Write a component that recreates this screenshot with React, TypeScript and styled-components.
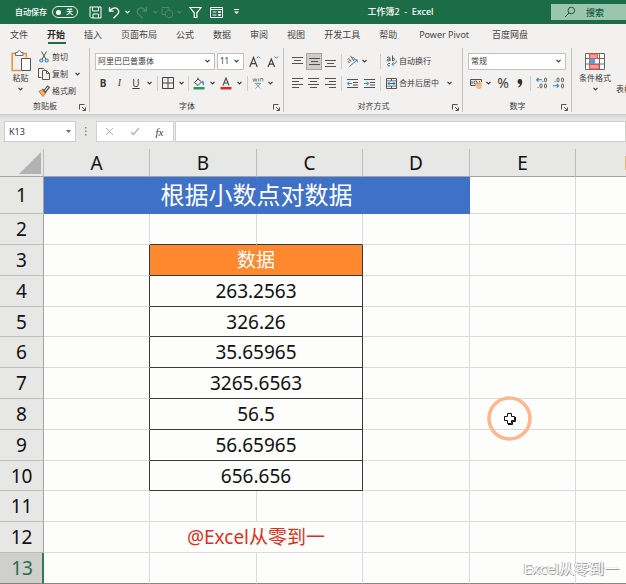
import React from 'react';
import styled, { createGlobalStyle, css } from 'styled-components';

const GlobalStyle = createGlobalStyle`
  *, *::before, *::after { box-sizing: border-box; }
  body {
    margin: 0;
    background: #e7e7e6;
    font-family: "Noto Sans", "Noto Sans CJK SC", sans-serif;
    color: #3b3a39;
    overflow: hidden;
  }
  button, input, select { font: inherit; color: inherit; }
  svg { display: block; flex: none; }
`;

const Window = styled.main`
  display: flex;
  flex-direction: column;
  overflow: hidden;
`;

/* ---------- Title bar ---------- */

const TitleBar = styled.header`
  display: flex;
  align-items: center;
  height: 24px;
  padding-left: 15px;
  background: #1c6c47;
  color: #fff;
  font-size: 9px;
`;

const AutoSave = styled.label`
  display: flex;
  align-items: center;
  gap: 5px;
  width: 70px;
  font-size: 8px;
  font-weight: 500;
  line-height: 12px;
  white-space: nowrap;
`;

const SwitchTrack = styled.span`
  display: flex;
  align-items: center;
  justify-content: space-between;
  width: 26px;
  height: 12px;
  padding: 0 4px 0 3px;
  border: 1px solid #e8f2ec;
  border-radius: 6px;
  font-size: 7px;
  line-height: 10px;
`;

const SwitchInput = styled.input`
  appearance: none;
  width: 5px;
  height: 5px;
  margin: 0;
  border-radius: 50%;
  background: #fff;
`;

const QuickButton = styled.button<{ $w: number; $dim?: boolean }>`
  display: flex;
  align-items: center;
  justify-content: center;
  width: ${(p) => p.$w}px;
  height: 20px;
  padding: 0;
  border: 0;
  background: none;
  color: ${(p) => (p.$dim ? '#4c8a6b' : '#fff')};
`;

const DocumentTitle = styled.h1`
  flex: 1;
  margin: 0;
  font-size: 9px;
  font-weight: 500;
  line-height: 12px;
  text-align: center;
  white-space: pre;
`;

const SearchBox = styled.label`
  display: flex;
  align-items: center;
  gap: 10px;
  width: 75px;
  height: 16px;
  padding-left: 13px;
  background: #9ac6b0;
  color: #17593a;
`;

const SearchInput = styled.input`
  width: 38px;
  padding: 0;
  border: 0;
  outline: 0;
  background: none;
  font-size: 9px;
  font-weight: 500;
  &::placeholder { color: #17593a; opacity: 1; }
`;

/* ---------- Tabs ---------- */

const Tabs = styled.nav`
  display: flex;
  height: 24px;
  padding-left: 1px;
  background: #f3f1ef;
`;

const Tab = styled.button<{ $active?: boolean; $addin?: boolean }>`
  height: 20px;
  padding: 1px ${(p) => (p.$addin ? 11 : 10)}px 0 ${(p) => (p.$addin ? 12 : 9)}px;
  border: 0;
  background: ${(p) =>
    p.$active
      ? 'linear-gradient(#1c6c47, #1c6c47) center bottom / 18px 2px no-repeat'
      : 'none'};
  color: ${(p) => (p.$active ? '#252423' : '#454341')};
  font-size: 9px;
  font-weight: ${(p) => (p.$active ? 700 : 400)};
  line-height: 14px;
  white-space: nowrap;
`;

/* ---------- Ribbon ---------- */

const Ribbon = styled.section`
  display: flex;
  height: 67px;
  background: #f3f1ef;
  border-bottom: 1px solid #cfcdcc;
  font-size: 8px;
  line-height: 12px;
  overflow: hidden;
`;

const Group = styled.div<{ $w?: number }>`
  display: flex;
  flex-direction: column;
  flex: ${(p) => (p.$w ? `0 0 ${p.$w}px` : '1 0 auto')};
  ${(p) =>
    p.$w &&
    css`
      background: linear-gradient(#c4c2c0, #c4c2c0) right top / 1px 64px no-repeat;
    `}
`;

const GroupBody = styled.div<{ $pad: number }>`
  display: flex;
  flex-direction: column;
  height: 51px;
  padding: 4px 0 0 ${(p) => p.$pad}px;
  gap: 4px;
`;

const GroupCaption = styled.div`
  display: grid;
  grid-template-columns: 14px 1fr 14px;
  align-items: center;
  height: 14px;
  text-align: center;
`;

const Caption = styled.span`
  grid-column: 2;
`;

const Launcher = styled.button`
  padding: 2px 0 0 3px;
  border: 0;
  background: none;
`;

const Line = styled.div`
  display: flex;
  align-items: center;
  height: 18px;
`;

const Tool = styled.button<{ $w: number; $pressed?: boolean; $start?: boolean }>`
  display: flex;
  align-items: center;
  justify-content: ${(p) => (p.$start ? 'flex-start' : 'center')};
  gap: 2px;
  width: ${(p) => p.$w}px;
  flex: none;
  height: 17px;
  padding: 0;
  border: ${(p) => (p.$pressed ? '1px solid #a6a4a2' : '0')};
  background: ${(p) => (p.$pressed ? '#cfcdcb' : 'none')};
  white-space: nowrap;
`;

const Rule = styled.span<{ $before?: number; $after: number }>`
  width: 1px;
  height: 15px;
  margin: 0 ${(p) => p.$after}px 0 ${(p) => p.$before ?? 0}px;
  background: #cfcdcb;
`;

const Glyph = styled.span<{ $kind: 'bold' | 'italic' | 'underline' }>`
  font-size: 10px;
  font-weight: ${(p) => (p.$kind === 'bold' ? 700 : 400)};
  font-style: ${(p) => (p.$kind === 'italic' ? 'italic' : 'normal')};
  font-family: ${(p) => (p.$kind === 'italic' ? '"Liberation Serif", serif' : 'inherit')};
  text-decoration: ${(p) => (p.$kind === 'underline' ? 'underline' : 'none')};
`;

const Percent = styled.span`
  font-size: 14px;
  line-height: 16px;
`;

const SelectBox = styled.label<{ $w: number }>`
  display: grid;
  grid-template-columns: 1fr 9px;
  align-items: center;
  width: ${(p) => p.$w}px;
  height: 17px;
  margin-right: 2px;
  flex: none;
  border: 1px solid #c4c2c0;
  background: #fff;
`;

const Select = styled.select`
  grid-area: 1 / 1 / 2 / 3;
  appearance: none;
  width: 100%;
  height: 15px;
  padding: 0 8px 0 2px;
  border: 0;
  outline: 0;
  background: none;
`;

const SelectArrow = styled.span`
  grid-area: 1 / 2;
  pointer-events: none;
`;

const ClipboardBody = styled.div`
  display: flex;
  height: 51px;
  padding-left: 7px;
`;

const BigTool = styled.button<{ $w: number; $top: number }>`
  display: flex;
  flex-direction: column;
  align-items: center;
  width: ${(p) => p.$w}px;
  flex: none;
  padding: ${(p) => p.$top}px 0 0;
  border: 0;
  background: none;
  white-space: nowrap;
`;

const BigLabel = styled.span<{ $gap: number }>`
  margin: ${(p) => p.$gap}px 0 3px;
`;

const ClipboardList = styled.div`
  display: flex;
  flex-direction: column;
  padding-left: 4px;
`;

const StylesBody = styled.div`
  display: flex;
  height: 51px;
  padding-left: 3px;
`;

/* ---------- Formula bar ---------- */

const FormulaBar = styled.section`
  display: flex;
  height: 34px;
  padding: 6px 0 7px 4px;
  background: linear-gradient(#d9d8d8, #e7e7e6 5px);
`;

const NameBox = styled.label`
  display: flex;
  align-items: center;
  width: 72px;
  padding: 0 4px;
  border: 1px solid #cfcfce;
  background: #fff;
`;

const NameInput = styled.input`
  flex: 1;
  min-width: 0;
  padding: 0;
  border: 0;
  outline: 0;
  background: none;
  font-size: 9px;
`;

const Dots = styled.span`
  display: flex;
  align-items: center;
  justify-content: center;
  width: 20px;
`;

const FormulaActions = styled.div`
  display: flex;
  align-items: center;
  width: 78px;
  border: 1px solid #d2d2d1;
  background: #fff;
`;

const FormulaButton = styled.button`
  display: flex;
  justify-content: center;
  width: 25px;
  padding: 0;
  border: 0;
  background: none;
  color: #b4b3b2;
`;

const Fx = styled.span`
  color: #3b3a39;
  font: italic 400 11px/12px "Liberation Serif", serif;
`;

const FormulaInput = styled.input`
  flex: 1;
  min-width: 0;
  margin-left: 1px;
  border: 1px solid #cfcfce;
  outline: 0;
  background: #fff;
`;

/* ---------- Sheet ---------- */

const Sheet = styled.section`
  position: relative;
  overflow: hidden;
`;

const Grid = styled.table`
  table-layout: fixed;
  width: 683px;
  border-collapse: separate;
  border-spacing: 0;
  background: #fdfdfc;
  color: #111;
  font-size: 19px;
  line-height: 24px;
`;

const Col = styled.col<{ $w: number }>`
  width: ${(p) => p.$w}px;
`;

const Row = styled.tr<{ $h: number }>`
  height: ${(p) => p.$h}px;
`;

const ColumnHead = styled.th`
  padding: 0;
  border-right: 1px solid #bdbcbd;
  border-bottom: 1px solid #a3a3a6;
  background: #e7e7e6;
  font-weight: 400;
`;

const RowHead = styled.th<{ $active?: boolean }>`
  padding: ${(p) => (p.$active ? '0 0 0 2px' : '0')};
  border-right: ${(p) => (p.$active ? '2px solid #2f7d58' : '1px solid #a3a3a6')};
  border-bottom: 1px solid ${(p) => (p.$active ? '#858587' : '#bdbcbd')};
  background: ${(p) => (p.$active ? '#cfcfce' : '#e7e7e6')};
  color: ${(p) => (p.$active ? '#286b4c' : '#111')};
  font-weight: 400;
`;

type CellLook = 'plain' | 'title' | 'heading' | 'value' | 'credit';

const looks = {
  plain: css``,
  title: css`
    background: #3f71c9;
    border-color: #3f71c9;
    color: #fff;
    font-size: 24px;
    line-height: 30px;
  `,
  heading: css`
    background: #fd882d;
    color: #fff;
    border-color: #3a3a3a;
  `,
  value: css`
    border-color: #3a3a3a;
  `,
  credit: css`
    color: #e0301c;
  `,
};

const Cell = styled.td<{ $look?: CellLook; $inkRight?: boolean; $inkBottom?: boolean; $last?: boolean }>`
  padding: 0;
  border-right: 1px solid #d9dbdc;
  border-bottom: 1px solid #d9dbdc;
  text-align: center;
  white-space: nowrap;
  ${(p) => looks[p.$look ?? 'plain']}
  ${(p) => p.$inkRight && 'border-right-color: #3a3a3a;'}
  ${(p) => p.$inkBottom && 'border-bottom-color: #3a3a3a;'}
  ${(p) => p.$last && 'border-bottom-color: #858587;'}
`;

const Pointer = styled.div`
  position: absolute;
  left: 487px;
  top: 247px;
`;

const Watermark = styled.div`
  position: absolute;
  right: 7px;
  bottom: 4px;
  color: #fdfdfc;
  font-size: 15px;
  line-height: 24px;
  text-shadow: 1px 1px 0 #9a9a9a, -1px 0 0 #b8b8b8;
`;

/* ---------- Icons ---------- */

const Caret = () => (
  <svg width="5" height="4" viewBox="0 0 5 4" fill="none" stroke="currentColor" strokeWidth="1.200"><path d="M.5 .8 2.5 2.8 4.5 .8" /></svg>
);

const SearchIcon = () => (
  <svg width="12" height="12" viewBox="0 0 12 12" fill="none" stroke="currentColor"><circle cx="7.3" cy="4.5" r="3.3" /><path d="M5 7 1 11" /></svg>
);

const SaveIcon = () => (
  <svg width="13" height="13" viewBox="0 0 13 13" fill="none" stroke="currentColor"><path d="M1 1h11v11H2.5L1 10.500zM3.500 1v4h6V1M4 12V8h5.500v4" /></svg>
);

const UndoIcon = ({ flip }: { flip?: boolean }) => (
  <svg width="12" height="13" viewBox="0 0 12 13" fill="none" stroke="currentColor" strokeWidth="1.3">
    <g transform={flip ? 'matrix(-1 0 0 1 12 0)' : undefined}><path d="M1.500 1v4.200h4.200M1.700 5C4 1.800 7.500 1 9.500 3s1.500 4-.3 5.600L5.500 12.300" /></g>
  </svg>
);

const ShapesIcon = () => (
  <svg width="13" height="13" viewBox="0 0 13 13" fill="none" stroke="currentColor"><path d="M4 8.500H1v-7h7V4" /><circle cx="8" cy="8" r="3.800" /></svg>
);

const FilterIcon = () => (
  <svg width="13" height="13" viewBox="0 0 13 13" fill="none" stroke="currentColor" strokeWidth="1.200"><path d="M1 1.500h11L7.900 6.800v4.700H5.200V6.800z" /></svg>
);

const FormIcon = () => (
  <svg width="13" height="11" viewBox="0 0 13 11" fill="none" stroke="currentColor"><path d="M.5 .5h12v10H.5zM.5 2.500h12M2.500 5h4M2.500 8h4M8.500 4.500h2v1h-2zM8.500 7.500h2v1h-2z" /></svg>
);

const CustomizeIcon = () => (
  <svg width="7" height="6" viewBox="0 0 7 6" fill="none" stroke="currentColor"><path d="M1 .5h5" /><path d="M1 2.500h5L3.500 5z" fill="currentColor" stroke="none" /></svg>
);

const LauncherIcon = () => (
  <svg width="7" height="7" viewBox="0 0 7 7" fill="none" stroke="#55534f"><path d="M.5 5.500v-5h5M3 3l3 3M6.500 3.500v3h-3" /></svg>
);

const PasteIcon = () => (
  <svg width="20" height="22" viewBox="0 0 20 22" fill="none">
    <path d="M4.500 3.500H1.200v17H10M12 3.500h3.300v4" stroke="#e8953a" strokeWidth="1.600" />
    <path d="M4.500 5.500v-3h2c.3-2.300 3.200-2.300 3.500 0h2v3z" fill="#fff" stroke="#6b6967" />
    <path d="M10.500 8.500h9v12h-9z" fill="#fff" stroke="#55534f" />
  </svg>
);

const CutIcon = () => (
  <svg width="12" height="12" viewBox="-1 0 12 12" fill="none"><path d="M2.500 .5 6.800 8M7.500 .5 3.200 8" stroke="#55534f" /><circle cx="2.300" cy="9.500" r="1.500" stroke="#2b88d8" strokeWidth="1.200" /><circle cx="7.700" cy="9.500" r="1.500" stroke="#2b88d8" strokeWidth="1.200" /></svg>
);

const CopyIcon = () => (
  <svg width="12" height="12" viewBox="0 0 12 12" fill="none" stroke="#55534f"><path d="M3.500 9.500h-3v-9h5l1 1M4.500 2.500h4l3 3v6h-7zM8.500 2.500v3h3" /></svg>
);

const BrushIcon = () => (
  <svg width="12" height="12" viewBox="0 0 12 12" fill="none"><path d="M1 6.500 4.500 4.500 7.500 8 5 11.500z" fill="#f5b26a" stroke="#d97a1c" /><path d="M4.500 4 8 8M6 5.500 9.500 1l1.800 1.500L7.500 7" stroke="#55534f" strokeWidth="1.200" /></svg>
);

const GrowFontIcon = ({ down }: { down?: boolean }) => (
  <svg width="12" height="13" viewBox="0 0 12 13" fill="none">
    <path d={down ? 'M1 12 4.300 4 7.600 12M2.300 9.200h4' : 'M.8 12 4.500 2.500 8.200 12M2 8.700h5'} stroke="#44423f" strokeWidth="1.200" />
    <path d={down ? 'M7.500 1.500 9.300 3.300 11 1.500' : 'M7.500 3.300 9.300 1.500 11 3.300'} stroke="#2b88d8" />
  </svg>
);

const BordersIcon = () => (
  <svg width="12" height="12" viewBox="0 0 12 12" fill="none" stroke="#44423f"><path d="M.5 .5h11v11H.5zM6 .5v11M.5 6h11" /></svg>
);

const FillIcon = () => (
  <svg width="12" height="13" viewBox="0 0 12 13" fill="none"><path d="M5 2 1.500 5.500 5 8.500 8.500 5zM5 2V.5" stroke="#44423f" /><path d="M9.300 4c1 1.500 1.500 3 .8 4" stroke="#2b88d8" strokeWidth="1.400" /><path d="M.5 10h11v2.500H.5z" fill="#239b62" /></svg>
);

const FontColorIcon = () => (
  <svg width="12" height="13" viewBox="0 0 12 13" fill="none"><path d="M3 8.500 6 1 9 8.500M4 6h4" stroke="#55534f" strokeWidth="1.200" /><path d="M.5 10h11v2.500H.5z" fill="#e8281c" /></svg>
);

const PhoneticIcon = () => (
  <svg width="12" height="12" viewBox="0 0 12 12" fill="none"><path d="M.8 1.500 1.800 4.500 3 1.500 4 4.500 5 1.500M6.500 1.500v3M8.300 4.500v-3h2.500v3" stroke="#77746f" strokeWidth=".8" /><path d="M3 6.500h6M6 5.500v1M4 7l4.500 4.500M8 7 3.500 11.500" stroke="#5aa0dc" strokeWidth=".9" /></svg>
);

const BarsIcon = ({ lines }: { lines: [number, number, number][] }) => (
  <svg width="11" height="11" viewBox="0 0 11 11" stroke="#55534f">
    {lines.map(([x, w, y]) => <path key={y} d={`M${x} ${y + 0.5}h${w}`} />)}
  </svg>
);

const OrientationIcon = () => (
  <svg width="12" height="12" viewBox="0 0 12 12" fill="none"><path d="M1.500 4.500c1.200-1.500 2.200-.5 2.800.5L5.200 6.500M3.500 5.500C1.500 6 2 8.500 4.200 7M4.500 .8 7.500 5.500M6 3c1.500-1.500 3.500.8 1.500 2.500" stroke="#55534f" strokeWidth=".9" /><path d="M3.500 11.500 11 5M8.300 4.800H11.200v2.800" stroke="#2b88d8" /></svg>
);

const IndentIcon = ({ right }: { right?: boolean }) => (
  <svg width="11" height="11" viewBox="0 0 11 11" fill="none"><path d="M0 1.500h11M6 4.500h5M6 7h5M0 9.500h11" stroke="#55534f" /><path d={right ? 'M0 5.500h4.500M2.800 3.500 4.800 5.500 2.800 7.500' : 'M5 5.500H.5M2.200 3.500.2 5.500 2.200 7.500'} stroke="#2b88d8" /></svg>
);

const WrapIcon = () => (
  <svg width="11" height="12" viewBox="0 0 11 12" fill="none"><path d="M1 2.500c2.500-1 3 0 3 1V6M4 4C1 3.500.3 6 2 6s2-1 2-1M6.500 .5V6M6.500 3.500c2-1.500 3.500 2.500 0 2.200M4 8.500c-3-1-3.500 3 0 2.300" stroke="#55534f" /><path d="M10.300 5.500C10.500 8 9 9.200 6 9.200M7.800 7.300 5.900 9.200 7.800 11.200" stroke="#2b88d8" /></svg>
);

const MergeIcon = () => (
  <svg width="11" height="11" viewBox="0 0 11 11" fill="none"><path d="M.5 .5h10v10H.5zM.5 3h10M.5 8h10M5.500 .5V3M5.500 8v2.500" stroke="#55534f" /><path d="M1 3.500h9v4H1z" fill="#d6eafb" /><path d="M2 5.500h7M3.500 4 2 5.500 3.500 7M7.500 4 9 5.500 7.500 7" stroke="#2b78c8" /></svg>
);

const CurrencyIcon = () => (
  <svg width="12" height="11" viewBox="0 0 12 11" fill="none"><path d="M5.500 7.500h-5v-6h11V4" stroke="#55534f" /><circle cx="5.500" cy="4.500" r="1.600" stroke="#55534f" /><path d="M2 3v3M9.500 3v1" stroke="#55534f" /><path d="M6.500 5.500c0-1.500 5-1.500 5 0v4c0 1.500-5 1.500-5 0z" fill="#f09a45" /><path d="M6.500 6.500c1 .8 4 .8 5 0M6.500 8.500c1 .8 4 .8 5 0" stroke="#fff" strokeWidth=".7" /></svg>
);

const CommaIcon = () => (
  <svg width="6" height="9" viewBox="0 0 6 9"><path d="M.5 2.500a2.300 2.300 0 0 1 4.800 0C5.300 5.500 4 7.500 1.500 8.500L1 7.700c1.200-.7 1.800-1.500 2-2.700C1.500 5.200.5 4 .5 2.500z" fill="#33312f" /></svg>
);

const DecimalIcon = ({ less }: { less?: boolean }) => (
  <svg width="12" height="12" viewBox="0 0 12 12" fill="none">
    <g stroke="#55534f" strokeWidth=".9">
      {less ? (
        <><rect x="4" y="1" width="2" height="3.800" rx="1" /><rect x="8.500" y="1" width="2" height="3.800" rx="1" /><rect x="8.500" y="7" width="2" height="3.800" rx="1" /><path d="M2 4v1" /></>
      ) : (
        <><rect x="8.500" y="1" width="2" height="3.800" rx="1" /><rect x="4" y="7" width="2" height="3.800" rx="1" /><rect x="8.500" y="7" width="2" height="3.800" rx="1" /><path d="M2 10v1M6.800 4v1" /></>
      )}
    </g>
    <path d={less ? 'M0 8.800h5.500M3.700 7 5.500 8.800 3.700 10.600' : 'M6 2.800H.8M2.500 1 .7 2.800 2.500 4.600'} stroke="#2b88d8" strokeWidth="1.100" />
  </svg>
);

const ConditionalIcon = () => (
  <svg width="20" height="17" viewBox="0 0 20 17" fill="none">
    <path d="M.5 .5h19v16H.5z" fill="#fff" />
    <path d="M.5 .5h19v16H.5zM4.500 .5v16M14.500 .5v16M.5 5.500h19M.5 11h19" stroke="#6b6967" />
    <path d="M4.500 1h8v4.500h-8zM4.500 11.500h9.500v4.500H4.500z" fill="#f79a94" stroke="#e2554d" />
    <path d="M4.500 6h5.500v5H4.500z" fill="#5a9fdc" />
  </svg>
);

const DotsIcon = () => (
  <svg width="2" height="9" viewBox="0 0 2 9" fill="#8a8987"><path d="M0 0h1.500v1.500H0zM0 3.500h1.500V5H0zM0 7h1.500v1.500H0z" /></svg>
);

const CancelIcon = () => (
  <svg width="9" height="9" viewBox="0 0 9 9" stroke="currentColor"><path d="M1 1l7 7M8 1 1 8" /></svg>
);

const EnterIcon = () => (
  <svg width="10" height="9" viewBox="0 0 10 9" fill="none" stroke="currentColor" strokeWidth="1.300"><path d="M1 5l2.500 2.500L9 1" /></svg>
);

const SelectAllIcon = () => (
  <svg width="43" height="27" viewBox="0 0 43 27"><path d="M41 3v22H19z" fill="#b3b3b4" /></svg>
);

const NameArrow = () => (
  <svg width="5" height="3" viewBox="0 0 5 3"><path d="M0 0h5L2.500 3z" fill="#6b6967" /></svg>
);

const PointerIcon = () => (
  <svg width="45" height="45" viewBox="0 0 45 45" fill="none">
    <circle cx="22.500" cy="22.500" r="20.500" stroke="#fcb78f" strokeWidth="3.600" />
    <path d="M20.500 17.500h4v3h3v4h-3v3h-4v-3h-3v-4h3z" fill="#fff" stroke="#111" />
    <path d="M21 28.500h4.500V25.500h3V21" stroke="#111" />
  </svg>
);

/* ---------- Pieces ---------- */

const DropDown = ({ label, width, value }: { label: string; width: number; value: string }) => (
  <SelectBox $w={width}>
    <Select aria-label={label} defaultValue={value}><option>{value}</option></Select>
    <SelectArrow><Caret /></SelectArrow>
  </SelectBox>
);

const More = ({ of, width = 12 }: { of: string; width?: number }) => (
  <Tool $w={width} aria-label={`${of}选项`}><Caret /></Tool>
);

const Footer = ({ text }: { text: string }) => (
  <GroupCaption>
    <Caption>{text}</Caption>
    <Launcher aria-label={`${text}设置`}><LauncherIcon /></Launcher>
  </GroupCaption>
);

const tabs = ['文件', '开始', '插入', '页面布局', '公式', '数据', '审阅', '视图', '开发工具', '帮助', 'Power Pivot', '百度网盘'];
const addins = ['Power Pivot', '百度网盘'];

const columns = [
  { name: 'A', width: 106 },
  { name: 'B', width: 107 },
  { name: 'C', width: 106 },
  { name: 'D', width: 107 },
  { name: 'E', width: 106 },
  { name: 'F', width: 107 },
];

type SheetRow = { height: number; look?: CellLook; text?: string };

const rows: SheetRow[] = [
  { height: 37, look: 'title', text: '根据小数点对数据' },
  { height: 31 },
  { height: 31, look: 'heading', text: '数据' },
  { height: 31, look: 'value', text: '263.2563' },
  { height: 30, look: 'value', text: '326.26' },
  { height: 31, look: 'value', text: '35.65965' },
  { height: 31, look: 'value', text: '3265.6563' },
  { height: 31, look: 'value', text: '56.5' },
  { height: 31, look: 'value', text: '56.65965' },
  { height: 30, look: 'value', text: '656.656' },
  { height: 31 },
  { height: 31, look: 'credit', text: '@Excel从零到一' },
  { height: 31 },
];

const RowCells = ({ row, index }: { row: SheetRow; index: number }) => {
  const last = index === rows.length - 1;
  const boxed = row.look === 'heading' || row.look === 'value';
  const beforeTable = rows[index + 1]?.look === 'heading';
  if (row.look === 'title') {
    return (
      <>
        <Cell colSpan={4} $look="title">{row.text}</Cell>
        <Cell />
        <Cell />
      </>
    );
  }
  return (
    <>
      <Cell $inkRight={boxed} $last={last} />
      {row.text ? (
        <Cell colSpan={2} $look={row.look}>{row.text}</Cell>
      ) : (
        <>
          <Cell $inkBottom={beforeTable} $last={last} />
          <Cell $inkBottom={beforeTable} $last={last} />
        </>
      )}
      <Cell $last={last} />
      <Cell $last={last} />
      <Cell $last={last} />
    </>
  );
};

export default function App() {
  return (
    <Window>
      <GlobalStyle />
      <TitleBar>
        <AutoSave>
          自动保存
          <SwitchTrack><SwitchInput type="checkbox" role="switch" />关</SwitchTrack>
        </AutoSave>
        <QuickButton $w={20} aria-label="保存"><SaveIcon /></QuickButton>
        <QuickButton $w={18} aria-label="撤消"><UndoIcon /></QuickButton>
        <QuickButton $w={8} aria-label="撤消列表"><Caret /></QuickButton>
        <QuickButton $w={22} $dim aria-label="恢复"><UndoIcon flip /></QuickButton>
        <QuickButton $w={4} $dim aria-label="恢复列表"><Caret /></QuickButton>
        <QuickButton $w={20} $dim aria-label="形状"><ShapesIcon /></QuickButton>
        <QuickButton $w={4} $dim aria-label="形状列表"><Caret /></QuickButton>
        <QuickButton $w={29} aria-label="筛选"><FilterIcon /></QuickButton>
        <QuickButton $w={13} aria-label="记录单"><FormIcon /></QuickButton>
        <QuickButton $w={27} aria-label="自定义快速访问工具栏"><CustomizeIcon /></QuickButton>
        <DocumentTitle>工作簿2  -  Excel</DocumentTitle>
        <SearchBox>
          <SearchIcon />
          <SearchInput type="search" placeholder="搜索" aria-label="搜索" />
        </SearchBox>
      </TitleBar>

      <Tabs>
        {tabs.map((name) => (
          <Tab key={name} $active={name === '开始'} $addin={addins.includes(name)}>{name}</Tab>
        ))}
      </Tabs>

      <Ribbon>
        <Group $w={90}>
          <ClipboardBody>
            <BigTool $w={27} $top={2}>
              <PasteIcon />
              <BigLabel $gap={0}>粘贴</BigLabel>
              <Caret />
            </BigTool>
            <ClipboardList>
              <Tool $w={34} $start><CutIcon />剪切</Tool>
              <Line>
                <Tool $w={30} $start><CopyIcon />复制</Tool>
                <More of="复制" width={18} />
              </Line>
              <Tool $w={40} $start><BrushIcon />格式刷</Tool>
            </ClipboardList>
          </ClipboardBody>
          <Footer text="剪贴板" />
        </Group>

        <Group $w={194}>
          <GroupBody $pad={5}>
            <Line>
              <DropDown label="字体" width={120} value="阿里巴巴普惠体" />
              <DropDown label="字号" width={27} value="11" />
              <Tool $w={18} aria-label="增大字号"><GrowFontIcon /></Tool>
              <Tool $w={17} aria-label="减小字号"><GrowFontIcon down /></Tool>
            </Line>
            <Line>
              <Tool $w={16} aria-label="加粗"><Glyph $kind="bold">B</Glyph></Tool>
              <Tool $w={17} aria-label="倾斜"><Glyph $kind="italic">I</Glyph></Tool>
              <Tool $w={16} aria-label="下划线"><Glyph $kind="underline">U</Glyph></Tool>
              <More of="下划线" width={10} />
              <Rule $before={3} $after={2} />
              <Tool $w={16} aria-label="边框"><BordersIcon /></Tool>
              <More of="边框" width={10} />
              <Rule $before={2} $after={2} />
              <Tool $w={16} aria-label="填充颜色"><FillIcon /></Tool>
              <More of="填充颜色" width={10} />
              <Tool $w={18} aria-label="字体颜色"><FontColorIcon /></Tool>
              <More of="字体颜色" width={8} />
              <Rule $before={4} $after={2} />
              <Tool $w={16} aria-label="拼音"><PhoneticIcon /></Tool>
              <More of="拼音" width={8} />
            </Line>
          </GroupBody>
          <Footer text="字体" />
        </Group>

        <Group $w={179}>
          <GroupBody $pad={5}>
            <Line>
              <Tool $w={17} aria-label="顶端对齐"><BarsIcon lines={[[0, 11, 1], [2, 7, 4], [0, 11, 7]]} /></Tool>
              <Tool $w={16} $pressed aria-label="垂直居中"><BarsIcon lines={[[0, 11, 2], [2, 7, 5], [0, 11, 8]]} /></Tool>
              <Tool $w={17} aria-label="底端对齐"><BarsIcon lines={[[0, 11, 4], [2, 7, 7], [0, 11, 10]]} /></Tool>
              <Rule $before={2} $after={2} />
              <Tool $w={16} aria-label="方向"><OrientationIcon /></Tool>
              <More of="方向" width={8} />
              <Rule $before={12} $after={5} />
              <Tool $w={48} $start><WrapIcon />自动换行</Tool>
            </Line>
            <Line>
              <Tool $w={16} aria-label="左对齐"><BarsIcon lines={[[0, 11, 0], [0, 7, 3], [0, 11, 6], [0, 7, 9]]} /></Tool>
              <Tool $w={17} aria-label="居中"><BarsIcon lines={[[0, 11, 0], [2, 7, 3], [0, 11, 6], [2, 7, 9]]} /></Tool>
              <Tool $w={17} aria-label="右对齐"><BarsIcon lines={[[0, 11, 0], [4, 7, 3], [0, 11, 6], [4, 7, 9]]} /></Tool>
              <Rule $before={2} $after={2} />
              <Tool $w={16} aria-label="减少缩进量"><IndentIcon /></Tool>
              <Tool $w={18} aria-label="增加缩进量"><IndentIcon right /></Tool>
              <Rule $before={2} $after={5} />
              <Tool $w={58} $start><MergeIcon />合并后居中</Tool>
              <More of="合并后居中" width={10} />
            </Line>
          </GroupBody>
          <Footer text="对齐方式" />
        </Group>

        <Group $w={109}>
          <GroupBody $pad={5}>
            <Line>
              <DropDown label="数字格式" width={98} value="常规" />
            </Line>
            <Line>
              <Tool $w={16} aria-label="会计数字格式"><CurrencyIcon /></Tool>
              <More of="会计数字格式" width={8} />
              <Tool $w={22} aria-label="百分比样式"><Percent>%</Percent></Tool>
              <Tool $w={12} aria-label="千位分隔样式"><CommaIcon /></Tool>
              <Rule $before={4} $after={3} />
              <Tool $w={16} aria-label="增加小数位数"><DecimalIcon /></Tool>
              <Tool $w={18} aria-label="减少小数位数"><DecimalIcon less /></Tool>
            </Line>
          </GroupBody>
          <Footer text="数字" />
        </Group>

        <Group>
          <StylesBody>
            <BigTool $w={40} $top={5}>
              <ConditionalIcon />
              <BigLabel $gap={2}>条件格式</BigLabel>
              <Caret />
            </BigTool>
            <BigTool $w={34} $top={35}>表格格式</BigTool>
          </StylesBody>
        </Group>
      </Ribbon>

      <FormulaBar>
        <NameBox>
          <NameInput aria-label="名称框" defaultValue="K13" />
          <NameArrow />
        </NameBox>
        <Dots><DotsIcon /></Dots>
        <FormulaActions>
          <FormulaButton aria-label="取消"><CancelIcon /></FormulaButton>
          <FormulaButton aria-label="输入"><EnterIcon /></FormulaButton>
          <FormulaButton aria-label="插入函数"><Fx>fx</Fx></FormulaButton>
        </FormulaActions>
        <FormulaInput aria-label="编辑栏" />
      </FormulaBar>

      <Sheet>
        <Grid>
          <colgroup>
            <Col $w={44} />
            {columns.map((c) => <Col key={c.name} $w={c.width} />)}
          </colgroup>
          <thead>
            <Row $h={28}>
              <ColumnHead aria-label="全选"><SelectAllIcon /></ColumnHead>
              {columns.map((c) => <ColumnHead key={c.name} scope="col">{c.name}</ColumnHead>)}
            </Row>
          </thead>
          <tbody>
            {rows.map((row, i) => (
              <Row key={i} $h={row.height}>
                <RowHead scope="row" $active={i === 12}>{i + 1}</RowHead>
                <RowCells row={row} index={i} />
              </Row>
            ))}
          </tbody>
        </Grid>
        <Pointer><PointerIcon /></Pointer>
        <Watermark>Excel从零到一</Watermark>
      </Sheet>
    </Window>
  );
}
